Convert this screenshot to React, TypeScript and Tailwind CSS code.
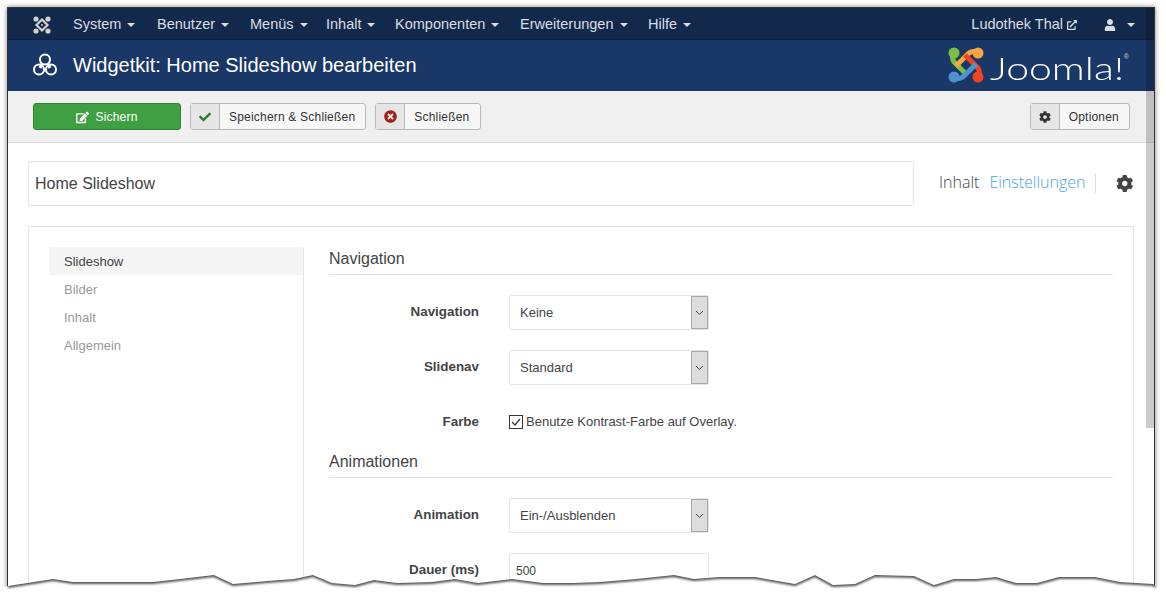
import { FaCheck, FaCog, FaEdit, FaExternalLinkAlt, FaTimesCircle, FaUser } from "react-icons/fa";

const menus = [
  { label: "System", width: "w-[84px]" },
  { label: "Benutzer", width: "w-[93px]" },
  { label: "Menüs", width: "w-[76px]" },
  { label: "Inhalt", width: "w-[69px]" },
  { label: "Komponenten", width: "w-[125px]" },
  { label: "Erweiterungen", width: "w-[128px]" },
  { label: "Hilfe", width: "w-[60px]" },
];
const tabs = ["Slideshow", "Bilder", "Inhalt", "Allgemein"];

const tear =
  "8,586 53,579 73,582 153,582 180,579 214,575 233,584 267,581 294,579 313,575 332,583 355,585 374,580 397,583 432,582 455,579 478,583 512,579 543,583 573,583 600,582 636,579 674,575 694,579 719,577 755,577 795,584 815,575 833,585 855,584 875,575 914,576 934,585 954,579 976,579 996,577 1016,583 1037,583 1059,577 1095,577 1120,582 1153,584 1156,586";

function JoomlaMark({ size }: { size: number }) {
  const arms = [
    { color: "#7ac143", r: 270 },
    { color: "#f9a541", r: 0 },
    { color: "#f44321", r: 90 },
    { color: "#5091cd", r: 180 },
  ];
  return (
    <svg width={size} height={size} viewBox="0 0 36 36">
      {arms.map((a) => (
        <g key={a.r} transform={`rotate(${a.r} 18 18)`} stroke={a.color} fill={a.color}>
          <circle cx="30" cy="6" r="5.5" stroke="none" />
          <path d="M29 5 C25 4 22 5 20 7 L8 19" strokeWidth="5" fill="none" />
        </g>
      ))}
    </svg>
  );
}

// the small monochrome version in the top bar reads as an X with a diamond in the middle
function JoomlaMono() {
  return (
    <svg width="18" height="18" viewBox="0 0 18 18" fill="#d5d2cc" stroke="#d5d2cc">
      <circle cx="3" cy="3" r="2.6" stroke="none" />
      <circle cx="15" cy="3" r="2.6" stroke="none" />
      <circle cx="3" cy="15" r="2.6" stroke="none" />
      <circle cx="15" cy="15" r="2.6" stroke="none" />
      <path d="M9 3.5L14.5 9 9 14.5 3.5 9Z" fill="none" strokeWidth="2.2" />
      <circle cx="9" cy="9" r="1" stroke="none" />
    </svg>
  );
}

function WidgetIcon() {
  return (
    <svg width="24" height="23" viewBox="0 0 24 23" fill="none" stroke="#fff" strokeWidth="2">
      <path d="M9 11l-2 4M15 11l2 4M10 17h4" strokeWidth="3" />
      <circle cx="12" cy="6.5" r="5" />
      <circle cx="6" cy="16.5" r="5" />
      <circle cx="18" cy="16.5" r="5" />
    </svg>
  );
}

function Caret() {
  return <span className="h-0 w-0 border-x-[4px] border-t-[4px] border-x-transparent border-t-current" />;
}

function ToolButton({ icon, label }: { icon: React.ReactNode; label: string }) {
  return (
    <div className="flex h-[27px] items-stretch rounded-[3px] border border-[#b9b9b9] bg-[#f7f7f7] text-xs text-[#333]">
      <span className="flex w-[29px] items-center justify-center border-r border-[#b9b9b9] bg-[#e6e6e6]">{icon}</span>
      <span className="flex items-center pt-px pr-[10px] pl-[9px] tracking-[0.2px]">{label}</span>
    </div>
  );
}

function Field({ label, className, children }: { label: string; className: string; children: React.ReactNode }) {
  return (
    <div className={`flex items-start ${className}`}>
      <label className="w-[150px] pt-[8px] text-right text-[13.4px] leading-[18px] font-bold text-[#444]">{label}</label>
      <div className="ml-[30px]">{children}</div>
    </div>
  );
}

function Select({ value }: { value: string }) {
  return (
    <div className="flex h-[35px] w-[200px] items-center justify-between rounded-[2px] border border-[#e5e5e5] bg-white pl-[10px] text-[13px] text-[#444]">
      <span>{value}</span>
      <span className="flex h-[33px] w-[17px] items-center justify-center border border-[#a9a9a9] bg-[#dddddd]">
        <svg width="9" height="6" viewBox="0 0 9 6" fill="none" stroke="#444" strokeWidth="1">
          <path d="M1 1l3.5 3.5L8 1" />
        </svg>
      </span>
    </div>
  );
}

export default function App() {
  return (
    <div className="relative h-[597px] w-[1166px] overflow-hidden bg-white pt-[7px] pl-[7px] font-['Liberation_Sans',Arial,sans-serif]">
      <div className="relative h-[590px] w-[1148px] overflow-hidden border-x border-t border-[#333] shadow-[0_0_5px_rgba(0,0,0,0.5)]">
        <nav className="flex h-[31px] items-center bg-[#13294b] pt-[2px] pl-[25px] text-[14.5px] text-[#d8dde6]">
          <JoomlaMono />
          <ul className="ml-[22px] flex">
            {menus.map((m) => (
              <li key={m.label} className={`flex items-center gap-[6px] ${m.width}`}>
                {m.label}
                <Caret />
              </li>
            ))}
          </ul>
          <div className="mr-[19px] ml-auto flex items-center gap-[4px]">
            Ludothek Thal
            <FaExternalLinkAlt className="h-[10px] w-[10px]" />
            <FaUser className="ml-[23px] h-[12px] w-[12px]" />
            <span className="ml-[7px] flex items-center">
              <Caret />
            </span>
          </div>
        </nav>
        <header className="flex h-[52px] items-center border-t border-[#0f2342] bg-[#1a3867] pr-[24px] pb-[2px] pl-[25px]">
          <WidgetIcon />
          <h1 className="ml-[16px] text-[20px] text-white">Widgetkit: Home Slideshow bearbeiten</h1>
          <div className="relative ml-auto flex items-center gap-[6px]">
            <JoomlaMark size={36} />
            <span className="w-[140px] origin-left scale-x-[1.28] pt-[6px] font-['Lato',sans-serif] text-[32px] leading-none font-light text-white">Joomla!</span>
            <span className="absolute top-[7px] right-[1px] text-[7px] leading-none text-[#c5ccd8]">®</span>
          </div>
        </header>
        <div className="flex h-[52px] items-center border-b border-[#dcdcdc] bg-[#f0f0f0] pr-[24px] pl-[25px]">
          <div className="flex h-[27px] w-[148px] items-center justify-center gap-[6px] rounded-[3px] border border-[#2f8532] bg-[#3f9f43] pt-px text-xs tracking-[0.2px] text-white">
            <FaEdit className="h-[13px] w-[13px]" />
            Sichern
          </div>
          <div className="ml-[9px]">
            <ToolButton icon={<FaCheck className="h-[12px] w-[12px] text-[#2f7d32]" />} label="Speichern & Schließen" />
          </div>
          <div className="ml-[9px] w-[106px]">
            <ToolButton icon={<FaTimesCircle className="h-[13px] w-[13px] text-[#a02020]" />} label="Schließen" />
          </div>
          <div className="ml-auto">
            <ToolButton icon={<FaCog className="h-[12px] w-[12px] text-[#333]" />} label="Optionen" />
          </div>
        </div>
        <main className="bg-white pt-[17px] pr-[20px] pl-[20px]">
          <div className="flex h-[46px] items-center">
            <div className="flex h-[45px] w-[886px] shrink-0 items-center rounded-[2px] border border-[#e5e5e5] pt-px pl-[6px] text-base text-[#444]">
              Home Slideshow
            </div>
            <span className="mb-[2px] ml-[25px] font-['Open_Sans',sans-serif] text-base font-light text-[#444]">Inhalt</span>
            <span className="mb-[2px] ml-[10px] font-['Open_Sans',sans-serif] text-base font-light text-[#3fa6ea]">Einstellungen</span>
            <span className="ml-[9px] h-[20px] w-px bg-[#ddd]" />
            <FaCog className="ml-[21px] h-[19px] w-[19px] text-[#444]" />
          </div>
          <section className="mt-[20px] flex h-[400px] w-[1106px] border border-[#e5e5e5] px-[20px] pt-[20px]">
            <aside className="w-[255px] shrink-0 border-r border-[#e5e5e5]">
              {tabs.map((t, i) => (
                <div key={t} className={`flex h-[28px] items-center pt-px pl-[15px] text-[13px] ${i === 0 ? "bg-[#f5f5f5] text-[#444]" : "text-[#999]"}`}>
                  {t}
                </div>
              ))}
            </aside>
            <div className="ml-[25px] flex-1">
              <h2 className="h-[28px] border-b border-[#e5e5e5] text-base leading-[24px] text-[#444]">Navigation</h2>
              <Field label="Navigation" className="mt-[20px]">
                <Select value="Keine" />
              </Field>
              <Field label="Slidenav" className="mt-[20px]">
                <Select value="Standard" />
              </Field>
              <Field label="Farbe" className="mt-[20px]">
                <div className="flex h-[34px] items-center gap-[3px] text-[13px] text-[#444]">
                  <span className="flex h-[14px] w-[14px] items-center justify-center border border-[#333] bg-white">
                    <svg width="10" height="8" viewBox="0 0 10 8" fill="none" stroke="#333" strokeWidth="1.2">
                      <path d="M1 4l3 3 5-6" />
                    </svg>
                  </span>
                  Benutze Kontrast-Farbe auf Overlay.
                </div>
              </Field>
              <h2 className="mt-[11px] h-[28px] border-b border-[#e5e5e5] text-base leading-[24px] text-[#444]">Animationen</h2>
              <Field label="Animation" className="mt-[20px]">
                <Select value="Ein-/Ausblenden" />
              </Field>
              <Field label="Dauer (ms)" className="mt-[20px]">
                <div className="flex h-[35px] w-[200px] items-center rounded-[2px] border border-[#e5e5e5] pl-[6px] text-xs text-[#444]">500</div>
              </Field>
            </div>
          </section>
        </main>
        <div className="absolute top-0 right-0 h-[420px] w-[8px] bg-black/20" />
      </div>
      <svg className="absolute top-0 left-0" width="1166" height="597" viewBox="0 0 1166 597">
        <defs>
          <filter id="blur" x="-5%" y="-100%" width="110%" height="300%">
            <feGaussianBlur stdDeviation="1.2" />
          </filter>
          <clipPath id="below">
            <polygon points={`0,597 0,588 ${tear} 1166,586 1166,597`} />
          </clipPath>
        </defs>
        <polygon points={`0,597 0,588 ${tear} 1166,586 1166,597`} fill="#fff" />
        <g clipPath="url(#below)">
          <polyline points={tear} fill="none" stroke="#555" strokeWidth="4" strokeLinejoin="round" filter="url(#blur)" />
        </g>
      </svg>
    </div>
  );
}
